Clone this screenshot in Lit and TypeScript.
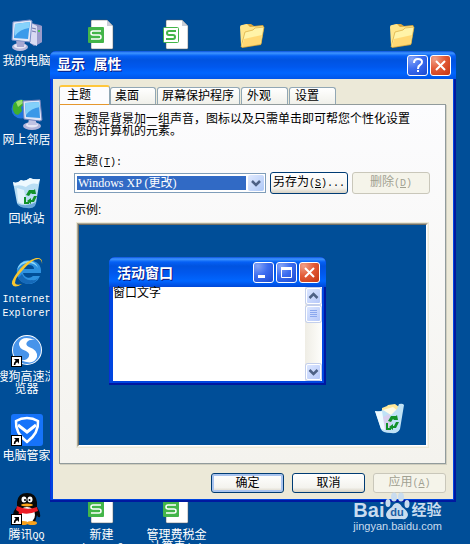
import { LitElement, html, css, svg, nothing } from "lit";
import { customElement, property } from "lit/decorators.js";

const shortcutArrow = svg`
  <rect x="0.5" y="21.5" width="10" height="10" fill="#fff" stroke="#000"/>
  <path d="M3 24h5v5l-1.700-1.700q-2 .8-2 2.700h-1.600q0-3 2-4.300z" fill="#000"/>`;

const arrows = svg`
  <path d="M15 18l3-5h5l1-1 1 5h-5l1-1h-1l-2 3zM26 19l-3 6h-3v2l-4-3 4-3v2h1l2-4z" fill="#12922a"/>
  <path d="M14 20v6h4" fill="none" stroke="#12922a" stroke-width="2"/>`;

const icons: Record<string, unknown> = {
  computer: svg`
    <path d="M20 4l9 2 2 1v16l-8 4-4-3z" fill="#8c8fc0"/>
    <path d="M20 4l6 3v20l-7-3z" fill="#d9dbf2"/>
    <path d="M26 8l5-1v16l-5 3z" fill="#9a9ccb"/>
    <path d="M21 9l4 1M21 12l4 1" stroke="#7376ab" stroke-width="1"/>
    <rect x="27" y="11" width="2" height="2" fill="#4bc64f"/>
    <ellipse cx="9" cy="28" rx="8" ry="4" fill="#b9bbdd"/>
    <ellipse cx="9" cy="27" rx="6" ry="2.500" fill="#e8e9f7"/>
    <path d="M5 21l9 1-1 6H6z" fill="#a6a8d2"/>
    <path d="M2 3l17-2 2 1-2 21-18-2z" fill="#e4e9f8" stroke="#7a8fc8" stroke-width="1"/>
    <path d="M4 5l15-2-2 17-14-1z" fill="#3b9bea"/>
    <path d="M4 5l15-2-1 6q-9 1-14 8z" fill="#86d2fb"/>`,
  network: svg`
    <circle cx="10" cy="11" r="9.500" fill="#1f74dd"/>
    <path d="M3 5q4-4 9-3l2 4-4 3 1 4-4 4-3-1q-4-5-1-11z" fill="#3fae2d"/>
    <path d="M5 4q3-2 6-2l1 3-5 4z" fill="#9be06d"/>
    <ellipse cx="21" cy="28" rx="9" ry="4" fill="#b4b6da"/>
    <ellipse cx="21" cy="27" rx="6" ry="2.500" fill="#e6e7f6"/>
    <path d="M18 20h6l2 7h-9z" fill="#c1c3e3"/>
    <path d="M12 3l17-1 2 20-2 1-16-2z" fill="#dfe5f7" stroke="#7183bd" stroke-width="1"/>
    <path d="M14 5l14-1 1 16-14-1z" fill="#3b98e8"/>
    <path d="M14 5l14-1 1 5q-9 1-14 8z" fill="#83d0fa"/>`,
  bin: svg`
    <path d="M2 5q4 2 8-2 4 2 9-2 4 2 10 1l-4 24q-2 5-9 4-9 0-10-4z" fill="#b9def4"/>
    <path d="M2 5q4 2 8-2 4 2 9-2 4 2 10 1l-2 5q-7-2-12 3-6-3-12-1z" fill="#eef9ff"/>
    <path d="M6 11l7 2 3 14q-8 0-9-3z" fill="#e2f3fc"/>
    <path d="M6 26q9 5 19-1l-1 4q-3 3-8 2-8 0-10-5z" fill="#68a7d8"/>
    ${arrows}`,
  fullbin: svg`
    <path d="M9 5l5-2 1-1 7-1 4 3v8H9z" fill="#ffe89a"/>
    <path d="M10 7l10-3 6 5-4 12-10-2z" fill="#fffbe6"/>
    <path d="M2 8q5 1 8-1l8 5 6-6 2-5q4-1 5 1l-4 24q-2 5-9 4-9 0-10-4z" fill="#bfe2f6"/>
    <path d="M10 14l6-3 3 7-3 10-6-2-1-6z" fill="#d7cfee"/>
    <path d="M2 8q5 1 7 0l3 19-4-1z" fill="#eefaff"/>
    ${arrows}`,
  ie: svg`
    <path d="M17 4a12 12 0 1 0 12 16h-7a6 6 0 0 1-10-3h18q1-12-13-13zm-5 9q2-5 6-4 5 0 5 4z" fill="#2d91e0" fill-rule="evenodd"/>
    <path d="M17 5q-9 0-11 9 4-7 11-7 7 0 10 5-2-7-10-7z" fill="#8dd8fa"/>
    <path d="M7 22q4 6 11 6 7-1 9-6-2 3-6 2-7 1-10-6z" fill="#1669b8"/>
    <path d="M31 8q1-7-6-6-8 2-16 11-9 11-8 15 2 5 10 0-6 2-7-1 0-5 7-12Q22 2 28 3q3 1 3 5z" fill="#f9c62f"/>`,
  sogou: svg`
    <circle cx="16" cy="15" r="15" fill="#fff"/>
    <circle cx="16" cy="15" r="14" fill="#4794ea"/>
    <path d="M24 5q-13-5-16 3-1 5 7 8 6 3 1 8-3 2-7 1 14 6 17-3 1-7-8-10-4-2-2-5 2-3 8-2z" fill="#fff"/>
    ${shortcutArrow}`,
  guard: svg`
    <rect width="32" height="32" rx="3" fill="#1673fa"/>
    <path d="M5 7q5-3 11-3t11 3q1 12-11 21Q4 19 5 7z" fill="none" stroke="#fff" stroke-width="2.500"/>
    <path d="M7 11l9 7 9-7" fill="none" stroke="#fff" stroke-width="3"/>
    ${shortcutArrow}`,
  qq: svg`
    <path d="M16 0q9 0 10 9v5q4 6 3 10-2 1-3-2l-2 7H8l-3-7q-2 4-3 1-1-4 4-9V9Q7 0 16 0z" fill="#080808"/>
    <ellipse cx="16" cy="22" rx="8" ry="8" fill="#fff"/>
    <ellipse cx="13" cy="6.500" rx="2.500" ry="3" fill="#fff"/>
    <ellipse cx="19" cy="6.500" rx="2.500" ry="3" fill="#fff"/>
    <circle cx="14" cy="7" r="1" fill="#000"/><circle cx="18.500" cy="7" r="1" fill="#000"/>
    <ellipse cx="16" cy="12" rx="6" ry="1.500" fill="#ffa51b"/>
    <path d="M6 13q10 5 20 1l1 4q-10 4-16 2v4l-4-1 1-4-3-2z" fill="#ec1c24"/>
    <ellipse cx="12" cy="30" rx="5" ry="2" fill="#f9a11b"/><ellipse cx="21" cy="30" rx="5" ry="2" fill="#f9a11b"/>
    ${shortcutArrow}`,
  sheet: svg`
    <path d="M5 2q0-1 1-1h15l6 6v22q0 1-1 1H6q-1 0-1-1z" fill="#fff" stroke="#555" stroke-width="0.500"/>
    <path d="M21 1l6 6h-6z" fill="#c9ced6"/>
    <rect x="2" y="8" width="16" height="16" rx="1" fill="#43b549"/>
    <path d="M15 12H7q-2 0-2 2t2 2h6q2 0 2 2t-2 2H5" fill="none" stroke="#fff" stroke-width="1.500"/>`,
  sheetlight: svg`
    <path d="M5 2q0-1 1-1h15l6 6v22q0 1-1 1H6q-1 0-1-1z" fill="#fff" stroke="#555" stroke-width="0.500"/>
    <path d="M21 1l6 6h-6z" fill="#c9ced6"/>
    <rect x="2.500" y="8.500" width="15" height="15" rx="1" fill="#fff" stroke="#43b549"/>
    <path d="M15 12H8q-2 0-2 2t2 2h4q2 0 2 2t-2 2H5" fill="none" stroke="#43b549" stroke-width="2"/>`,
  folder: svg`
    <path d="M5 7l5-2 5 0 3 2 9-1 1 2-3 18-19 3z" fill="#d8a63c"/>
    <path d="M4 8q0-2 2-2l5-1 3 3 13-1-2 18-19 3q-1 0-1-2z" fill="#ffe68c"/>
    <path d="M9 13l8-2 2-2 9-1-3 17-20 3z" fill="#fff3a8" stroke="#d9aa3d" stroke-width="0.700"/>
    <path d="M8 20l18-4-2 9-18 3z" fill="#ffd874"/>`,
};

type Item = { icon: string; lines: string[]; col: number; row: number };

const items: Item[] = [
  { icon: "computer", lines: ["我的电脑"], col: 1, row: 1 },
  { icon: "sheet", lines: [], col: 2, row: 1 },
  { icon: "sheetlight", lines: [], col: 3, row: 1 },
  { icon: "folder", lines: [], col: 4, row: 1 },
  { icon: "folder", lines: [], col: 6, row: 1 },
  { icon: "network", lines: ["网上邻居"], col: 1, row: 2 },
  { icon: "bin", lines: ["回收站"], col: 1, row: 3 },
  { icon: "ie", lines: ["Internet", "Explorer"], col: 1, row: 4 },
  { icon: "sogou", lines: ["搜狗高速浏", "览器"], col: 1, row: 5 },
  { icon: "guard", lines: ["电脑管家"], col: 1, row: 6 },
  { icon: "qq", lines: ["腾讯QQ"], col: 1, row: 7 },
  { icon: "sheet", lines: ["新建", "Microsoft"], col: 2, row: 7 },
  { icon: "sheet", lines: ["管理费税金", "计算表(2)"], col: 3, row: 7 },
];

/* CJK text runs at 12px, Latin runs in a half-width monospace. */
const mixed = (text: string) =>
  text
    .split(/([\x20-\x7e]+)/)
    .map((t) => (/^[\x20-\x7e]+$/.test(t) ? html`<span class="latin">${t}</span>` : t));

const shared = css`
  * { box-sizing: border-box; }
  svg { display: block; }
  button { font: inherit; color: inherit; margin: 0; padding: 0; }
  .latin { font-family: "Liberation Mono", monospace; font-size: 10px; white-space: pre; }
`;

@customElement("caption-button")
class CaptionButton extends LitElement {
  @property() kind = "close";
  static styles = [shared, css`
    :host { display: block; }
    .cap {
      display: block; width: 21px; height: 21px; border: 1px solid #fff; border-radius: 3px;
      background: radial-gradient(circle at 20% 15%, #86a4f5, #3c6df0 45%, #1a49d0);
    }
    .close { background: radial-gradient(circle at 20% 15%, #f0a088, #e35b37 45%, #c43410); }
  `];
  render() {
    const glyph: Record<string, unknown> = {
      help: svg`<path d="M6 7q0-4 4-4 4 0 4 3 0 2-2 3-2 1-2 4" fill="none" stroke="#fff" stroke-width="2"/><rect x="9" y="14" width="2" height="2" fill="#fff"/>`,
      close: svg`<path d="M5 5l9 9M14 5l-9 9" stroke="#fff" stroke-width="2"/>`,
      min: svg`<rect x="4" y="12" width="7" height="3" fill="#fff"/>`,
      max: svg`<path d="M4.500 5.500h10v9h-10z" fill="none" stroke="#fff"/><rect x="4" y="4" width="11" height="3" fill="#fff"/>`,
    };
    const names: Record<string, string> = { help: "帮助", close: "关闭", min: "最小化", max: "最大化" };
    return html`<button class="cap ${this.kind}" aria-label=${names[this.kind]}>
      <svg width="19" height="19" viewBox="0 0 19 19">${glyph[this.kind]}</svg>
    </button>`;
  }
}

@customElement("theme-preview")
class ThemePreview extends LitElement {
  static styles = [shared, css`
    :host {
      display: block; position: relative; background: #004e98; padding: 32px 30px 60px;
      border: 1px solid; border-color: #716f64 #fff #fff #716f64;
    }
    .window {
      width: 217px; border-radius: 6px 6px 0 0; padding: 0 4px 4px;
      background: #0046e0; box-shadow: inset -2px -2px #0019a0, inset 1px 0 #0831d9;
    }
    .title {
      display: flex; align-items: center; gap: 2px; height: 30px; margin: 0 -4px; padding: 1px 6px 0 8px;
      border-radius: 6px 6px 0 0; color: #fff; font-size: 14px; font-weight: 700; text-shadow: 1px 1px #0a1883;
      background: linear-gradient(#0a50dc, #3d95ff 2px, #0560f5 5px, #0053e0 9px, #0058ee 16px, #0066ff 24px, #0048d8);
    }
    .name { flex: 1; }
    .body { display: flex; height: 94px; background: #fff; color: #000; line-height: 12px; }
    .text { flex: 1; }
    .scroll { width: 17px; display: flex; flex-direction: column; background: linear-gradient(90deg, #efede5, #fefefb); padding: 1px; }
    .arrow {
      width: 15px; height: 16px; border: 1px solid #fff; border-radius: 2px;
      background: linear-gradient(135deg, #dbe6ff, #b7c9f9); box-shadow: 0 0 0 1px #c3cfec;
    }
    .thumb { margin-top: 2px; }
    .down { margin-top: auto; }
    .bin { position: absolute; right: 21px; bottom: 10px; }
  `];
  render() {
    return html`
      <div class="window">
        <div class="title">
          <span class="name">活动窗口</span>
          <caption-button kind="min"></caption-button>
          <caption-button kind="max"></caption-button>
          <caption-button kind="close"></caption-button>
        </div>
        <div class="body">
          <div class="text">窗口文字</div>
          <div class="scroll">
            <button class="arrow" aria-label="向上"><svg width="13" height="14"><path d="M2.500 9l4-4 4 4" fill="none" stroke="#4d6185" stroke-width="2.500"/></svg></button>
            <div class="arrow thumb"><svg width="13" height="14"><path d="M3 3.500h7M3 5.500h7M3 7.500h7M3 9.500h7" stroke="#8ba8ee"/></svg></div>
            <button class="arrow down" aria-label="向下"><svg width="13" height="14"><path d="M2.500 5l4 4 4-4" fill="none" stroke="#4d6185" stroke-width="2.500"/></svg></button>
          </div>
        </div>
      </div>
      <svg class="bin" width="32" height="32" viewBox="0 0 32 32">${icons.fullbin}</svg>
    `;
  }
}

@customElement("display-properties")
class DisplayProperties extends LitElement {
  static styles = [shared, css`
    :host {
      display: block; padding: 0 3px 3px; border-radius: 6px 6px 0 0; color: #000;
      background: #0046e0; box-shadow: inset -2px -2px #0019a0, inset 1px 0 #0831d9;
    }
    .title {
      display: flex; align-items: center; gap: 2px; height: 28px; margin: 0 -3px; padding: 0 5px 0 7px;
      border-radius: 6px 6px 0 0; color: #fff; font-size: 14px; font-weight: 700; text-shadow: 1px 1px #0a1883;
      background: linear-gradient(#0a50dc, #3d95ff 2px, #0560f5 5px, #0053e0 9px, #0058ee 16px, #0066ff 22px, #0055e8);
    }
    .name { flex: 1; font-family: "Liberation Mono", "Noto Sans CJK SC", monospace; }
    .content { background: #ece9d8; padding: 6px 7px 6px 6px; }
    .tabs { display: flex; align-items: flex-end; gap: 1px; }
    .tab {
      position: relative; height: 17px; padding: 0 5px; border: 1px solid #91a7b4; border-bottom: 0; border-radius: 3px 3px 0 0;
      background: linear-gradient(#fff, #f0f0ea); line-height: 16px; text-align: left; white-space: nowrap;
      flex: 0 0 47px;
    }
    .wide { flex-basis: 83px; padding: 0 4px; }
    .active {
      flex-basis: 51px; height: 20px; margin: 0 -1px -1px 0; padding: 0 7px 2px; z-index: 1;
      border-top: 2px solid #ffc73c; box-shadow: 0 -1px #e5972d inset, inset 0 -2px #fcfcfe; background: #fcfcfe;
    }
    .active + .tab { flex-basis: 46px; padding: 0 4px; }
    .panel {
      border: 1px solid #919b9c; box-shadow: 1px 1px #d0cebf; padding: 8px 15px 15px 14px;
      background: linear-gradient(#fcfcfe, #f4f3ee);
    }
    p { margin: 0 0 18px; line-height: 12px; white-space: nowrap; }
    .label { display: block; line-height: 12px; }
    u { text-decoration: underline; }
    .row { display: flex; align-items: center; gap: 4px; margin: 3px 0 10px; }
    .combo { flex: 1; min-width: 0; height: 20px; display: flex; gap: 1px; padding: 1px; border: 1px solid #7f9db9; background: #fff; }
    select {
      appearance: none; flex: 1; min-width: 0; margin: 1px; padding: 0 1px; border: 0; border-radius: 0; outline: 0;
      background: #316ac5; color: #fff; font: 12px "Liberation Serif", "Noto Sans CJK SC", serif; line-height: 14px;
    }
    .drop { width: 16px; border-radius: 2px; background: linear-gradient(135deg, #e1eafe, #aec8f7); pointer-events: none; }
    .btn {
      height: 20px; flex: 0 0 73px; border: 1px solid #003c74; border-radius: 3px; line-height: 16px; white-space: nowrap;
      background: linear-gradient(#fff, #f4f3ee 75%, #d8d2c4);
    }
    .side { flex-basis: 78px; height: 22px; }
    .default { box-shadow: inset 0 0 0 2px #a9c4ef; }
    .btn:disabled { color: #a1a192; border-color: #c9c7ba; background: #f5f4ea; }
    .frame { margin: 6px 1px 0 2px; border: 1px solid #ece9d8; }
    .edge { border: 1px solid; border-color: #aca899 #f4f3ee #f4f3ee #aca899; }
    .actions { display: flex; justify-content: flex-end; gap: 8px; margin-top: 9px; }
  `];
  render() {
    const tabs = ["主题", "桌面", "屏幕保护程序", "外观", "设置"];
    return html`
      <div class="title">
        <span class="name">显示 属性</span>
        <caption-button kind="help"></caption-button>
        <caption-button kind="close"></caption-button>
      </div>
      <div class="content">
        <div class="tabs" role="tablist">
          ${tabs.map((t, i) => html`<button role="tab" aria-selected=${i === 0}
            class="tab ${i === 0 ? "active" : ""} ${t.length > 2 ? "wide" : ""}">${t}</button>`)}
        </div>
        <div class="panel" role="tabpanel">
          <p>主题是背景加一组声音，图标以及只需单击即可帮您个性化设置<br>您的计算机的元素。</p>
          <label class="label" for="theme">主题<span class="latin">(<u>T</u>):</span></label>
          <div class="row">
            <div class="combo">
              <select id="theme"><option>Windows XP (更改)</option></select>
              <svg class="drop" width="16" height="16"><path d="M4 6l4 4 4-4" fill="none" stroke="#4d6185" stroke-width="2.500"/></svg>
            </div>
            <button class="btn side">另存为<span class="latin">(<u>S</u>)...</span></button>
            <button class="btn side" disabled>删除<span class="latin">(<u>D</u>)</span></button>
          </div>
          <span class="label">示例:</span>
          <div class="frame"><div class="edge"><theme-preview></theme-preview></div></div>
        </div>
        <div class="actions">
          <button class="btn default">确定</button>
          <button class="btn">取消</button>
          <button class="btn" disabled>应用<span class="latin">(<u>A</u>)</span></button>
        </div>
      </div>
    `;
  }
}

@customElement("app-root")
class AppRoot extends LitElement {
  static styles = [shared, css`
    :host {
      display: block; position: relative; height: 100vh; overflow: hidden; background: #004e98; color: #fff;
      font: 12px/12px "Liberation Sans", "Noto Sans CJK SC", sans-serif;
    }
    .desktop {
      display: grid; grid-template-columns: repeat(6, 75px); grid-auto-rows: 79px;
      margin: 0 0 0 -11px; padding-top: 19px;
    }
    .item { display: flex; flex-direction: column; align-items: center; text-align: center; white-space: nowrap; }
    .caption { margin-top: 4px; }
    .dialog { position: absolute; left: 50px; right: 14px; top: 51px; }
    .mark { position: absolute; right: 28px; bottom: 12px; color: #c9dcef; }
    .brand { display: flex; align-items: flex-end; height: 29px; }
    .bai { font: 700 20px/20px "Liberation Sans", sans-serif; }
    .yan { font-weight: 700; font-size: 15px; line-height: 20px; }
    .url { font-size: 11px; line-height: 12px; }
  `];
  render() {
    return html`
      <div class="desktop">
        ${items.map((it) => html`
          <div class="item" style="grid-area: ${it.row} / ${it.col}">
            <svg width="32" height="32" viewBox="0 0 32 32">${icons[it.icon]}</svg>
            ${it.lines.length ? html`<div class="caption">${it.lines.map((l) => html`<div>${mixed(l)}</div>`)}</div>` : nothing}
          </div>`)}
      </div>
      <display-properties class="dialog"></display-properties>
      <div class="mark">
        <div class="brand">
          <span class="bai">Bai</span>
          <svg width="27" height="28" viewBox="0 0 27 28">
            <g fill="#c9dcef">
              <ellipse cx="4" cy="11" rx="2.500" ry="4"/><ellipse cx="10" cy="5" rx="3" ry="4.500"/>
              <ellipse cx="17" cy="5" rx="3" ry="4.500"/><ellipse cx="23" cy="12" rx="2.500" ry="4"/>
              <path d="M13 11q3 0 5 4 6 4 6 8-1 5-6 4h-10q-5 1-6-4 0-4 6-8 2-4 5-4z"/>
            </g>
            <text x="13" y="24" text-anchor="middle" font-family="Liberation Sans" font-size="11" font-weight="700" fill="#1b5ea5">du</text>
          </svg>
          <span class="yan">经验</span>
        </div>
        <div class="url">jingyan.baidu.com</div>
      </div>
    `;
  }
}
